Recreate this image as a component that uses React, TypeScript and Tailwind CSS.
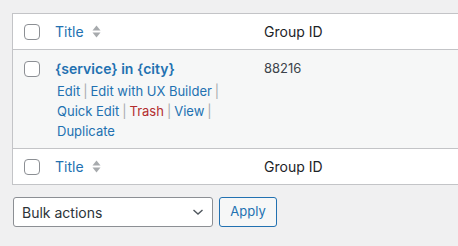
import React from "react";

const font = { fontFamily: 'Inter, "Noto Sans", "Liberation Sans", sans-serif' };

function Check() {
  return <span className="block w-4 h-4 rounded-[4px] border border-[#8c8f94] bg-white shrink-0" />;
}

function SortArrows() {
  return (
    <svg width="9" height="13" viewBox="0 0 9 13" className="ml-[8px]">
      <path d="M4.5 0.5 L8.5 5.5 L0.5 5.5 Z" fill="#a7aaad" />
      <path d="M0.5 7.5 L8.5 7.5 L4.5 12.5 Z" fill="#a7aaad" />
    </svg>
  );
}

function HeadRow({ bottom }: { bottom?: boolean }) {
  return (
    <div className={`flex h-[36px] items-center bg-white ${bottom ? "border-t border-[#c3c4c7]" : "border-b border-[#c3c4c7]"}`}>
      <div className="w-[42px] pl-[11px] flex items-center">
        <Check />
      </div>
      <div className="w-[209px] flex items-center text-[14px] text-[#2271b1]">
        Title
        <SortArrows />
      </div>
      <div className="text-[14px] text-[#1d2327]">Group ID</div>
    </div>
  );
}

const Sep = () => <span className="text-[#a7aaad] mx-[3px]">|</span>;

export default function App() {
  return (
    <div className="w-[458px] h-[246px] bg-[#f0f0f1] overflow-hidden pl-[12px] pt-[13px]" style={font}>
      <div className="w-[470px] border border-[#c3c4c7] bg-white">
        <HeadRow />
        <div className="flex bg-[#f6f7f7] pt-[8px] pb-[7px]">
          <div className="w-[42px] pl-[11px] pt-[3px]">
            <Check />
          </div>
          <div className="w-[209px]">
            <div className="text-[14px] leading-[21px] font-semibold text-[#2271b1]">{"{service} in {city}"}</div>
            <div className="pt-[2px] pl-[2px] text-[13px] leading-[20px] text-[#2271b1]">
              <div>Edit<Sep />Edit with UX Builder<Sep /></div>
              <div>Quick Edit<Sep /><span className="text-[#b32d2e]">Trash</span><Sep />View<Sep /></div>
              <div>Duplicate</div>
            </div>
          </div>
          <div className="text-[13px] leading-[21px] text-[#3c434a]">88216</div>
        </div>
        <HeadRow bottom />
      </div>
      <div className="flex gap-[6px] mt-[12px] pl-[1px]">
        <div className="w-[200px] h-[30px] border border-[#8c8f94] rounded-[3px] bg-white flex items-center justify-between pl-[8px] pr-[8px] text-[14px] text-[#2c3338]">
          <span>Bulk actions</span>
          <svg width="12" height="8" viewBox="0 0 12 8">
            <path d="M1.5 2 L6 6 L10.5 2" stroke="#50575e" strokeWidth="1.4" fill="none" />
          </svg>
        </div>
        <div className="w-[58px] h-[30px] border border-[#2271b1] rounded-[3px] bg-[#f6f7f7] flex items-center justify-center text-[13px] text-[#2271b1]">
          Apply
        </div>
      </div>
    </div>
  );
}
